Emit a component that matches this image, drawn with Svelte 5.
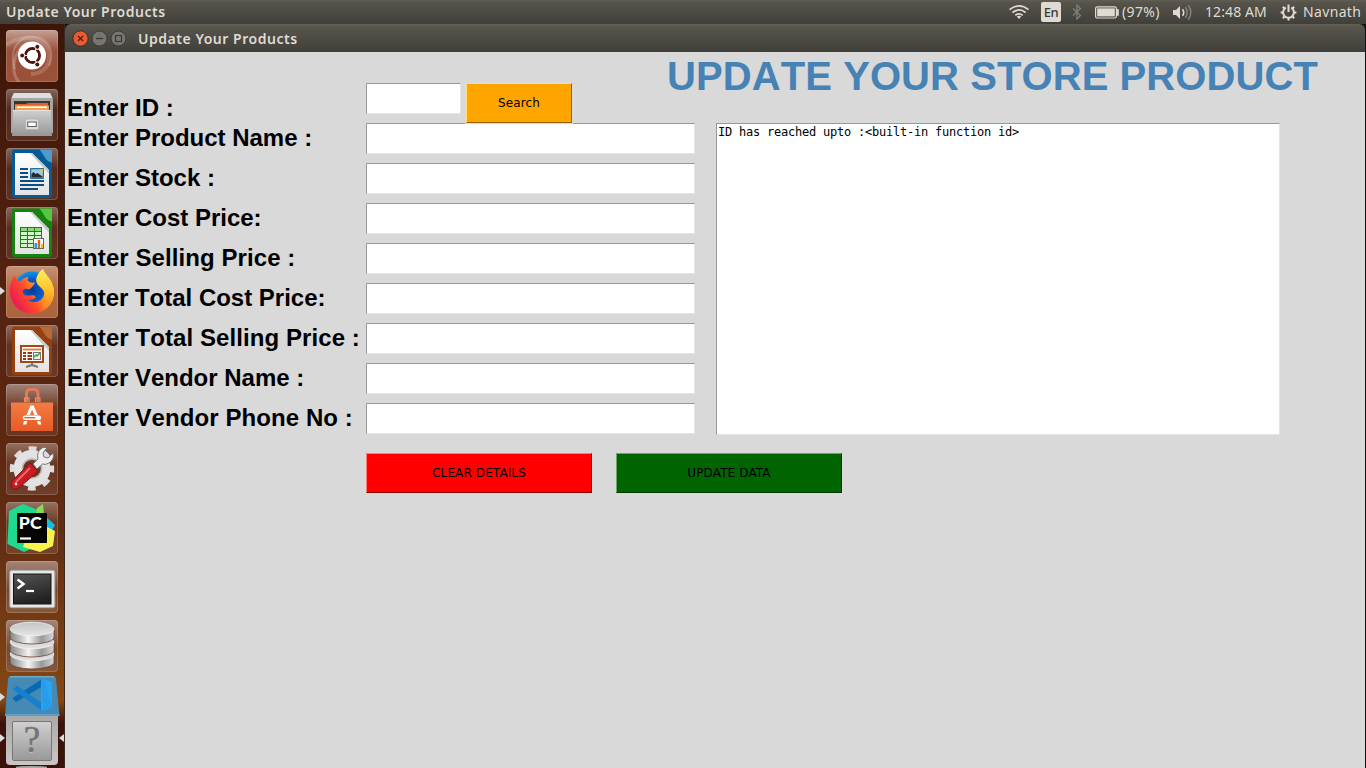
<script>
  const fields = [
    { text: 'Enter Product Name :', tight: true }, { text: 'Enter Stock :', tight: true }, { text: 'Enter Cost Price:', tight: true }, { text: 'Enter Selling Price :' },
    { text: 'Enter Total Cost Price:', tight: true }, { text: 'Enter Total Selling Price :' }, { text: 'Enter Vendor Name :', tight: true }, { text: 'Enter Vendor Phone No :' }
  ];
  const apps = [
    { id: 'dash' }, { id: 'files' }, { id: 'writer' }, { id: 'calc' }, { id: 'firefox', running: true }, { id: 'impress' },
    { id: 'software' }, { id: 'settings' }, { id: 'pycharm' }, { id: 'terminal' }, { id: 'database' }
  ];
</script>

{#snippet doc(color, light)}
  <path d="M8 1.5H45Q46 1.5 46 3V47Q46 50 43 50H9Q6 50 6 47V4Q6 1.5 8 1.5Z" fill={color} />
  <path d="M33.5 1.5H46V14.5Q42 14 39.5 10.5Q37 6 33.5 1.5Z" fill={light} />
  <path d="M9 5H26L43 22V47H9Z" fill="url(#paper)" />
  <path d="M26 5L43 22V26L24 5Z" fill="#c9c9c9" />
{/snippet}

<svg class="defs" width="0" height="0" aria-hidden="true">
  <defs>
    <linearGradient id="paper" x2="0" y2="1"><stop stop-color="#fff" /><stop offset="1" stop-color="#e2e2e2" /></linearGradient>
    <linearGradient id="metal"><stop stop-color="#858585" /><stop offset=".2" stop-color="#b8b8b8" /><stop offset=".42" stop-color="#f4f4f4" /><stop offset=".72" stop-color="#989898" /><stop offset="1" stop-color="#d8d8d8" /></linearGradient>
    <linearGradient id="lid" x2="0" y2="1"><stop stop-color="#c4c4c4" /><stop offset="1" stop-color="#e4e4e4" /></linearGradient>
    <linearGradient id="cabinet" x2="0" y2="1"><stop stop-color="#cfcfcf" /><stop offset="1" stop-color="#969696" /></linearGradient>
    <linearGradient id="fox" x1="0.1" y1="0.7" x2="0.9" y2="0.2"><stop stop-color="#ed1f4e" /><stop offset=".35" stop-color="#ff4b2b" /><stop offset=".65" stop-color="#ff9a1b" /><stop offset="1" stop-color="#fff04a" /></linearGradient>
    <linearGradient id="flame" x2="0" y2="1"><stop stop-color="#fff35c" /><stop offset=".5" stop-color="#ffc12c" /><stop offset="1" stop-color="#ff7a22" /></linearGradient>
    <radialGradient id="globe"><stop stop-color="#063a98" /><stop offset=".6" stop-color="#0b5ccc" /><stop offset="1" stop-color="#0d95e6" /></radialGradient>
    <linearGradient id="bag" x2="0" y2="1"><stop stop-color="#f37d45" /><stop offset="1" stop-color="#e85a23" /></linearGradient>
    <linearGradient id="term" x2=".3" y2="1"><stop stop-color="#555" /><stop offset="1" stop-color="#222" /></linearGradient>
  </defs>
</svg>

<div class="desktop">
  <header class="panel">
    <span class="app-title">Update Your Products</span>
    <div class="indicators">
      <svg class="wifi" width="22" height="16" viewBox="0 0 22 16" fill="none" stroke="#dfdbd2" stroke-width="1.7"><path d="M1.5 5.6Q11-1.8 20.5 5.6M4.4 8.5Q11 3.4 17.6 8.5M7.3 11.3Q11 8.4 14.7 11.3" /><path d="M8.7 12.5Q11 11.2 13.3 12.5L11 14.9Z" fill="#dfdbd2" stroke="none" /></svg>
      <span class="lang">En</span>
      <svg class="bt" width="10" height="16" viewBox="0 0 10 16" fill="none" stroke="#85827a" stroke-width="1.2"><path d="M1 4.5L8.5 11.5L5 15V1L8.5 4.5L1 11.5" /></svg>
      <svg class="battery" width="24" height="13" viewBox="0 0 24 13"><rect x=".6" y=".8" width="20.8" height="11.2" rx="1.8" fill="none" stroke="#dfdbd2" stroke-width="1.2" /><rect x="2.2" y="2.4" width="17.6" height="8" fill="#dfdbd2" /><path d="M22 3.2h1.8v6.5H22Z" fill="#dfdbd2" /></svg>
      <span class="percent">(97%)</span>
      <svg class="volume" width="21" height="17" viewBox="0 0 21 17" fill="none"><path d="M1 6h3l4-4v13l-4-4H1Z" fill="#dfdbd2" /><path d="M10.5 5.2Q13 8.5 10.5 11.8" stroke="#dfdbd2" stroke-width="1.6" /><path d="M13.4 3.3Q17 8.5 13.4 13.7M16.3 1.3Q21.3 8.5 16.3 15.7" stroke="#85827a" stroke-width="1.5" /></svg>
      <span class="clock">12:48 AM</span>
      <svg class="gear" width="17" height="17" viewBox="0 0 17 17" fill="none" stroke="#dfdbd2"><path d="M5.8 3.7a5.4 5.4 0 1 0 5.4 0" stroke-width="2" /><path d="M8.5 .5V8M.6 8.5h3M13.4 8.5h3M2.8 2.8l2 2M14.2 2.8l-2 2M2.8 14.2l2-2M14.2 14.2l-2-2M8.5 13.5v3" stroke-width="2" /></svg>
      <span class="user">Navnath</span>
    </div>
  </header>

  <div class="workspace">
    <nav class="launcher">
      {#each apps as app}
        <div class="tile {app.id}" class:running={app.running}>
          <svg width="52" height="52" viewBox="0 0 52 52">
            {#if app.id === 'dash'}
              <g fill="none" stroke="#fff"><path d="M9 39C2 20 13 4 30 7C43 9 49 22 43 36" stroke-width="2" opacity=".2" /><path d="M0 15C17 4 41 5 43 25C44 38 35 44 25 44" stroke-width="4" opacity=".17" /><path d="M13 52C4 42 7 22 19 15" stroke-width="3" opacity=".22" /></g>
              <circle cx="26" cy="25.5" r="14" fill="#fff" /><circle cx="26.5" cy="25.5" r="7" fill="none" stroke="#4b160f" stroke-width="3" />
              <path d="M26.5 25.5L15 25.5M26.5 25.5L32 16M26.5 25.5L32 35" stroke="#fff" stroke-width="1.2" /><circle cx="26.5" cy="25.5" r="5.5" fill="#fff" />
              <g fill="#4b160f" stroke="#fff" stroke-width="1"><circle cx="16.2" cy="25.5" r="2.5" /><circle cx="31.3" cy="16.8" r="2.5" /><circle cx="31.3" cy="34.5" r="2.5" /></g>
            {:else if app.id === 'files'}
              <path d="M8 4H44L47 10V44H5V10Z" fill="#a6a6a6" /><path d="M8 4H44L46.5 9H5.5Z" fill="#dedede" /><path d="M8 12H44V25H8Z" fill="#393633" />
              <path d="M9 15H20L22 14H42V24H9Z" fill="#e0602a" /><path d="M9 16.5H43V22H9Z" fill="#f3a04c" /><path d="M11 17.5H41V19H11Z" fill="#fff" />
              <path d="M7 21H45L46 47H6Z" fill="url(#cabinet)" /><path d="M7 21.5H45" stroke="#e3e3e3" /><rect x="19.5" y="30" width="13" height="10.5" rx="1.5" fill="#ddd" stroke="#b4b4b4" /><rect x="21.7" y="33" width="8.6" height="4.5" fill="#fff" stroke="#5c5c5c" />
            {:else if app.id === 'writer'}
              {@render doc('#075b94', '#4b9bd0')}
              <path d="M14 21H22M14 25H22M14 29H22M14 33H38M14 37H38M14 41H32" stroke="#0d4d82" stroke-width="2" /><rect x="24.7" y="20.7" width="12.6" height="9.6" fill="#9bcbea" stroke="#075082" /><path d="M25.5 29.5V26l2-2 2 2 2-1 2 1.5 3 2v1Z" fill="#282828" /><path d="M33 21h4v4Z" fill="#edc42b" />
            {:else if app.id === 'calc'}
              {@render doc('#168310', '#55c63f')}
              <rect x="14.5" y="20.5" width="21" height="20" fill="#d6f8cf" stroke="#168310" /><path d="M15 21H35V24H15Z" fill="#6dcc54" opacity=".7" /><path d="M14.5 24.5H35.5M14.5 28.5H35.5M14.5 32.5H35.5M14.5 36.5H35.5M21.5 20.5V41M28.5 20.5V41" stroke="#168310" /><rect x="27.5" y="31.5" width="10" height="10" fill="#fff" stroke="#666" /><path d="M28.5 36h2.5v5h-2.5Z" fill="#16a0ee" /><path d="M31.7 33h2.5v8h-2.5Z" fill="#e36315" /><path d="M35 37h2v4h-2Z" fill="#f5be16" />
            {:else if app.id === 'firefox'}
              <circle cx="26" cy="24" r="18.5" fill="url(#globe)" />
              <path d="M9 9C5 15 3 21 4 28C6 41 16 47.5 26 47.5C39 47.5 48 38 48 26C48 20 45 15 40 10C38 7 37 5 37 3C31 8 29 13 32 18C36 22 39 25 38 29C36 36 28 38 22 34C25 34.5 27 33 30 31.5C28 27 24 31 19 29C16 27 16 24 19 23C20 22 22 24 24 23C27 20 28.5 18 29 16.5C25 17 22.5 16 21.5 14L22.5 10.5C18 12 16 13 14.5 15L11.5 14.5C10 13 9.2 11 9 9Z" fill="url(#fox)" />
              <path d="M37 3C39 9 46 12 47.5 22C49 34 42 42 34 44C39 39 42 31 38 25C34 20 29 18 30.5 12C32 8 34 5 37 3Z" fill="url(#flame)" />
            {:else if app.id === 'impress'}
              {@render doc('#95400f', '#b96837')}
              <rect x="15" y="21" width="22" height="16" fill="#fff" stroke="#a84515" stroke-width="2" /><path d="M17 24.5H35" stroke="#d78652" stroke-width="2" /><path d="M17 28H20M17 31H20M17 34H20M21.5 28H26M21.5 31H26M21.5 34H26" stroke="#8c3c16" stroke-width="1.8" /><rect x="27.5" y="27.5" width="7" height="7" fill="#eee" stroke="#777" /><path d="M28 32l2-2 1 1 3-3" fill="none" stroke="#30a735" stroke-width="1.3" /><path d="M26 38V40L20 42M26 40L32 42" fill="none" stroke="#777" stroke-width="2" />
            {:else if app.id === 'software'}
              <path d="M5 18.5H47V47H5Z" fill="url(#bag)" /><path d="M20.5 18V9.5Q20.5 5.5 24 5.5H28.5Q32 5.5 32 9.5V18" fill="none" stroke="#e07a58" stroke-width="3" /><path d="M18.5 18v-4h4.5v4M29.5 18v-4h4.5v4" fill="none" stroke="#f28c68" stroke-width="1.2" />
              <path d="M20.5 31L24.5 21.5H27.7L31.7 31H28.3L26.1 25.5L23.9 31ZM18 37H21.3L20.3 40.5H17ZM31 37H34.3L35.3 40.5H32Z" fill="#fff" /><rect x="16.8" y="31.5" width="18.4" height="4.4" rx="2.2" fill="#fff" /><rect x="18.4" y="33" width="11" height="1.4" fill="#e85c25" />
            {:else if app.id === 'settings'}
              <circle cx="26" cy="25.5" r="19.7" fill="none" stroke="#dcdcdc" stroke-width="5" stroke-dasharray="7.74 7.73" stroke-dashoffset="3.87" />
              <circle cx="26" cy="25.5" r="14" fill="none" stroke="#e2e2e2" stroke-width="9" /><circle cx="26" cy="25.5" r="9.6" fill="none" stroke="#bababa" stroke-width="1.6" />
              <path d="M5 43Q4 39 8 36L24 20L32 28L14 44Q8 49 5 43Z" fill="#c61c22" stroke="#7f1519" /><path d="M10 39L24 25" stroke="#ed676b" stroke-width="2" /><circle cx="10" cy="41" r="1.4" fill="#f7d4d3" /><path d="M27 21L32 16Q30 8 37 4.5L41 4.5L37 10L38 14L42 15L47 10Q49 17 42 20.5Q39 22 36.5 21L31 26Z" fill="#ededed" stroke="#777" stroke-width="1" />
            {:else if app.id === 'pycharm'}
              <path d="M3 9L17 2L32 8L38 41L18 50L1.5 42Z" fill="#20d88e" /><path d="M31 6L37 2L41 42L23 44Z" fill="#86da54" /><path d="M38 13L49 23L41 37Z" fill="#07c3ee" /><path d="M37 23L49 29L47 44L34 50L17 45L20 37Z" fill="#f6f350" /><path d="M11 11H41V41H11Z" fill="#050505" /><text x="12.8" y="27" font-family="Lato" font-size="16.5" font-weight="900" fill="#fff" textLength="22.8" lengthAdjust="spacingAndGlyphs">PC</text><path d="M14 36.5H25" stroke="#fff" stroke-width="2.2" />
            {:else if app.id === 'terminal'}
              <rect x="3.8" y="9.3" width="45" height="37.4" rx="1.8" fill="#e7e7e7" stroke="#aaa" /><rect x="7.5" y="13" width="37.5" height="30" fill="url(#term)" stroke="#141414" /><path d="M11.5 18.5L17.5 23L11.5 27.5" fill="none" stroke="#fff" stroke-width="2.5" /><path d="M20 30H28" stroke="#fff" stroke-width="2.2" />
            {:else}
              {#each [34, 22, 9] as y}
                <path d="M4 {y}V{y + 8}A22 7 0 0 0 48 {y + 8}V{y}Z" fill="url(#metal)" stroke="#6d4636" stroke-width=".8" />
                <ellipse cx="26" cy={y} rx="21.8" ry="6.8" fill="url(#lid)" stroke="#f4f4f4" stroke-width=".8" />
              {/each}
            {/if}
          </svg>
        </div>
      {/each}
      <div class="vscode running">
        <svg width="56" height="41" viewBox="0 0 56 41"><path d="M6 1H48Q50.5 1 51 4L54.5 41H0L3 4Q3.5 1 6 1Z" fill="#458ab5" /><path d="M5 1.7H49" stroke="#71a8c8" stroke-width="1.5" /><path d="M0 40H54.5" stroke="#6aa7cd" stroke-width="1.6" /><path d="M7.5 23L11 27L38 11V3.5Z" fill="#0869b4" /><path d="M8 14.5L12 10.5L38 29V36.5Z" fill="#1680cf" /><path d="M36 3L47 7V32.5L38 36.5L36 35Z" fill="#2ba5f3" /><path d="M36 3L38 36.5L47 32.5L40 5Z" fill="#2296e4" opacity=".5" /></svg>
      </div>
      <div class="unknown running active">
        <div class="question">?</div>
      </div>
      <div class="next"></div>
    </nav>

    <main class="window">
      <div class="titlebar">
        <svg width="56" height="18" viewBox="0 0 56 18"><circle cx="8.5" cy="8.5" r="7.7" fill="#e95b2e" stroke="#3d2b23" /><path d="M5.9 5.9L11.1 11.1M11.1 5.9L5.9 11.1" stroke="#502413" stroke-width="1.4" /><circle cx="27.5" cy="8.5" r="7.5" fill="#76756f" stroke="#3b3a36" /><path d="M24 8.5H31" stroke="#3b3a36" stroke-width="1.3" /><circle cx="46.5" cy="8.5" r="7.5" fill="#76756f" stroke="#3b3a36" /><rect x="43.5" y="5.5" width="6" height="6" fill="none" stroke="#3b3a36" stroke-width="1.2" /></svg>
        <span>Update Your Products</span>
      </div>
      <div class="content">
        <div class="upper">
          <form class="form">
            <div class="row id-row"><label for="pid">Enter ID :</label><input id="pid" /><button type="button" class="search">Search</button></div>
            {#each fields as field, i}
              <div class="row"><label for="field-{i}" class:tight={field.tight}>{field.text}</label><input id="field-{i}" /></div>
            {/each}
          </form>
          <section class="output">
            <h1>UPDATE YOUR STORE PRODUCT</h1>
            <div class="log">ID has reached upto :&lt;built-in function id&gt;</div>
          </section>
        </div>
        <div class="actions"><button class="clear">CLEAR DETAILS</button><button class="update">UPDATE DATA</button></div>
      </div>
    </main>
  </div>
</div>

<style>
  :global(body) { margin: 0; overflow: hidden; }
  .defs { display: block; }
  .desktop { width: 1366px; height: 768px; display: flex; flex-direction: column; overflow: hidden; background: #111; }
  .panel { height: 24px; flex: none; box-sizing: border-box; display: flex; align-items: center; justify-content: space-between; padding: 0 5px 0 6px; background: linear-gradient(#605d52, #56534b 12%, #403f3a); color: #dfdbd2; font: 14px/24px "Noto Sans", sans-serif; white-space: nowrap; }
  .app-title, .titlebar span { font: 600 14px/24px "Noto Sans", sans-serif; letter-spacing: .53px; color: #dfdbd2; }
  .indicators { display: flex; align-items: center; height: 24px; width: 353px; }
  .indicators > * { flex: none; display: block; }
  .wifi { margin-right: 11px; }
  .lang { width: 20px; height: 20px; border-radius: 2px; background: #dfdbd2; color: #3c3b37; font: 500 13px/21px "Noto Sans", sans-serif; letter-spacing: -.4px; text-align: center; margin-right: 11px; }
  .bt { margin-right: 13px; }
  .battery { margin-right: 3px; }
  .percent { width: 50px; letter-spacing: .35px; }
  .volume { margin-right: 12px; }
  .clock { width: 75px; letter-spacing: .1px; }
  .gear { margin-right: 6px; }
  .user { letter-spacing: .35px; }
  .workspace { flex: 1; min-height: 0; display: flex; }
  .launcher { width: 65px; box-sizing: border-box; flex: none; padding: 6px 0 0 6px; display: flex; flex-direction: column; align-items: flex-start; background: linear-gradient(#3d1609, #542211 35%, #622c13 68%, #854813 91%, #3b1209 94%); border-right: 1px solid #3a2820; }
  .tile { width: 52px; height: 52px; margin-bottom: 7px; flex: none; border-radius: 4px; position: relative; background: linear-gradient(#ffffff55, #ffffff10 40%, #ffffff18); box-shadow: inset 0 0 0 1px #ffffff2b; }
  .tile svg { display: block; }
  .dash { background: linear-gradient(#c5a094, #99513a 40%, #9c5038); }
  .firefox { background: linear-gradient(#c49278, #b36b42 45%, #a9643f); }
  .software { background: linear-gradient(#a0847a, #6f3b28 45%, #693420); }
  .terminal, .database { background: linear-gradient(#a38478, #77492e 55%, #875839); }
  .running::before { content: ''; position: absolute; left: -6px; top: 21px; border-left: 5px solid #ddd; border-top: 4.5px solid transparent; border-bottom: 4.5px solid transparent; }
  .vscode { width: 56px; height: 41px; margin: -4px 0 0 -1px; flex: none; position: relative; }
  .vscode.running::before { left: -5px; top: 18px; }
  .vscode svg { display: block; }
  .unknown { width: 52px; height: 49px; flex: none; border-radius: 0 0 4px 4px; background: linear-gradient(#aaa, #c9c6c4); position: relative; display: flex; justify-content: center; align-items: center; }
  .unknown.running::before { top: 18px; }
  .unknown::after { content: ''; position: absolute; left: 53px; top: 18px; border-right: 5px solid #ddd; border-top: 4.5px solid transparent; border-bottom: 4.5px solid transparent; }
  .question { width: 38px; height: 38px; border: 1px solid #777; border-radius: 2px; background: linear-gradient(#d0d0d0, #999); color: #747474; font: 37px/35px "Liberation Serif", serif; text-align: center; -webkit-text-stroke: .6px #747474; text-shadow: 0 1px #ccc; }
  .next { width: 31px; height: 4px; margin: 1px 0 0 10px; border-radius: 50% 50% 0 0; background: #aaa; }
  .window { width: 1300px; height: 744px; display: flex; flex-direction: column; }
  .titlebar { height: 28px; flex: none; box-sizing: border-box; display: flex; align-items: center; padding: 1px 0 0 7px; gap: 10px; background: linear-gradient(#625f54, #57544c 12%, #403f3a); border-radius: 6px 6px 0 0; }
  .content { flex: 1; background: #d9d9d9; }
  .upper { display: flex; height: 401px; }
  .form { width: 630px; flex: none; padding-top: 31px; box-sizing: border-box; }
  .row { height: 40px; display: flex; align-items: flex-start; padding-left: 2px; }
  label { width: 299px; flex: none; font: bold 24px/30px "Liberation Sans", Arial, sans-serif; letter-spacing: .08px; color: #000; white-space: nowrap; font-kerning: none; }
  label.tight { letter-spacing: -.01px; }
  .id-row label { align-self: flex-end; letter-spacing: 0; }
  input { width: 329px; height: 31px; box-sizing: border-box; margin: 0; padding: 2px; border: 1px solid; border-color: #989898 #e5e5e5 #e5e5e5 #989898; border-radius: 0; outline: none; background: #fff; }
  .id-row input { width: 95px; }
  button { box-sizing: border-box; height: 40px; padding: 0 0 1px; border: 1px solid; border-radius: 0; color: #000; font: 12px "DejaVu Sans", sans-serif; letter-spacing: .12px; }
  .search { width: 106px; margin-left: 5px; position: relative; background: #ffa500; border-color: #ffdf7c #966100 #966100 #ffdf7c; box-shadow: 0 0 0 1px #d9d9d9; }
  .output { width: 670px; box-sizing: border-box; padding-left: 21px; }
  h1 { margin: 0 0 0 -49px; height: 71px; font: bold 40px/48px "Liberation Sans", Arial, sans-serif; color: #4682b4; letter-spacing: .08px; white-space: nowrap; font-kerning: none; }
  .log { width: 564px; height: 312px; box-sizing: border-box; border: 1px solid; border-color: #989898 #e5e5e5 #e5e5e5 #989898; background: #fff; padding: 1px; font: 12px/14px "DejaVu Sans Mono", monospace; letter-spacing: -.224px; color: #000; }
  .actions { display: flex; gap: 24px; padding-left: 301px; }
  .actions button { width: 226px; }
  .clear { background: #f00; border-color: #ff7c7c #960000 #960000 #ff7c7c; }
  .update { background: #006400; border-color: #6ca66c #003a00 #003a00 #6ca66c; }
</style>
